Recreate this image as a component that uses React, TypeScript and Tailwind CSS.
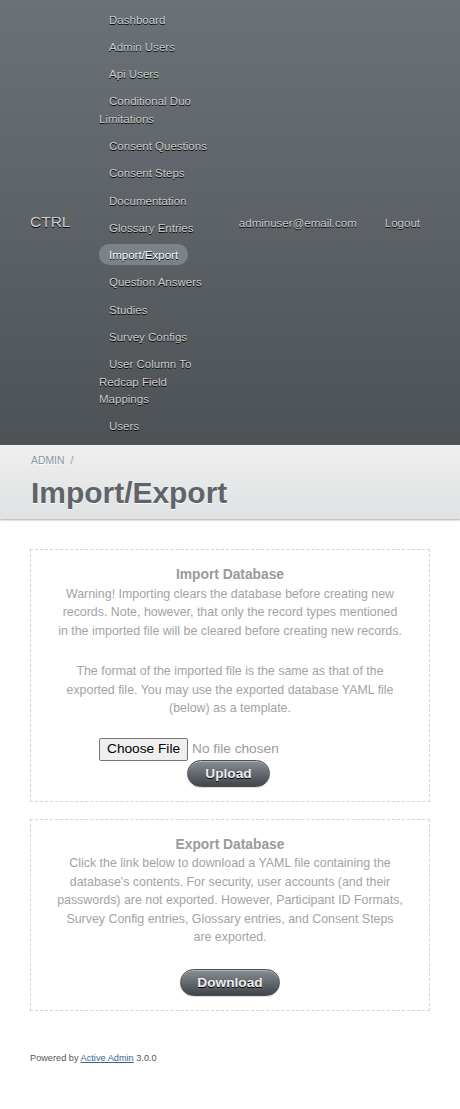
import React from "react";

const navItems = [
  "Dashboard",
  "Admin Users",
  "Api Users",
  "Conditional Duo Limitations",
  "Consent Questions",
  "Consent Steps",
  "Documentation",
  "Glossary Entries",
  "Import/Export",
  "Question Answers",
  "Studies",
  "Survey Configs",
  "User Column To Redcap Field Mappings",
  "Users",
];

function DarkButton({ label, px }: { label: string; px: string }) {
  return (
    <span
      className={`inline-block rounded-full border border-[#484e53] bg-[linear-gradient(180deg,#878e94,#40454a)] ${px} h-[27px] leading-[25px] text-[13.7px] font-bold text-[#efefef] [text-shadow:0_1px_0_#000] shadow-[inset_0_1px_0_rgba(255,255,255,0.35),0_1px_1px_rgba(0,0,0,0.15)]`}
    >
      {label}
    </span>
  );
}

export default function App() {
  return (
    <div className="min-h-[1109px] bg-white font-['Liberation_Sans',Arial,sans-serif] text-[11.52px] leading-[17.28px] text-[#323537]">
      {/* Header */}
      <div className="flex h-[445px] items-center border-b border-[#4e5258] bg-[linear-gradient(180deg,#6b7277,#4d5256)] px-[30px] [text-shadow:0_1px_0_#000]">
        <div className="w-[39px] text-[15.5px] font-normal leading-[22px] text-[#cdcdcd]">
          CTRL
        </div>
        <div className="ml-[30px] flex w-[111px] flex-col gap-[10px] pt-[3px]">
          {navItems.map((item) => (
            <div key={item} className="text-[#cdcdcd]">
              {item === "Import/Export" ? (
                <span className="rounded-[10px] bg-[#7b8288] px-[10px] pb-[4px] pt-[5px] text-white">
                  {item}
                </span>
              ) : (
                <span className="pl-[10px]">{item}</span>
              )}
            </div>
          ))}
        </div>
        <div className="mt-[3px] flex flex-1 justify-end gap-[8px] text-[#cdcdcd]">
          <span className="px-[10px]">adminuser@email.com</span>
          <span className="px-[10px]">Logout</span>
        </div>
      </div>

      {/* Title bar */}
      <div className="relative bg-[linear-gradient(180deg,#efefef,#dfe1e2)] px-[31px] pb-[8px] pt-[8px] shadow-[0_1px_2px_#aaa] [text-shadow:0_1px_0_#fff]">
        <div className="text-[10.4px] leading-[16px] text-[#8a949e]">
          ADMIN <span className="ml-[3px]">/</span>
        </div>
        <h2 className="mt-[6px] text-[29.95px] font-bold leading-[36px] text-[#5e6469]">
          Import/Export
        </h2>
      </div>

      {/* Content */}
      <div className="px-[30px] pt-[30px]">
        <div className="border border-dashed border-[#d4d4d4] px-[25.5px] pb-[14px] pt-[16px] text-center text-[12.4px] leading-[18.5px] text-[#a3a3a3]">
          <div className="text-[13.8px] font-bold text-[#9a9a9a]">Import Database</div>
          <p>
            Warning! Importing clears the database before creating new records. Note, however,
            that only the record types mentioned in the imported file will be cleared before
            creating new records.
          </p>
          <p className="mt-[22px]">
            The format of the imported file is the same as that of the exported file. You may use
            the exported database YAML file (below) as a template.
          </p>
          <div className="mx-auto mt-[20px] flex w-[262px] items-center text-[13.7px] leading-[16px]">
            <span className="flex h-[23px] items-center rounded-[2px] border border-[#767676] bg-[#efefef] px-[7px] text-black">
              Choose File
            </span>
            <span className="ml-[4px] text-[#9a9a9a]">No file chosen</span>
          </div>
          <div className="-mt-[1px] flex justify-center pr-[3px]">
            <DarkButton label="Upload" px="px-[17px]" />
          </div>
        </div>

        <div className="mt-[17px] border border-dashed border-[#d4d4d4] px-[25.5px] pb-[14px] pt-[16px] text-center text-[12.4px] leading-[18.5px] text-[#a3a3a3]">
          <div className="text-[13.8px] font-bold text-[#9a9a9a]">Export Database</div>
          <p>
            Click the link below to download a YAML file containing the database's contents. For
            security, user accounts (and their passwords) are not exported. However, Participant
            ID Formats, Survey Config entries, Glossary entries, and Consent Steps are exported.
          </p>
          <div className="mt-[22px] flex justify-center">
            <DarkButton label="Download" px="px-[16px]" />
          </div>
        </div>
      </div>

      {/* Footer */}
      <div className="px-[30px] pt-[40px] text-[9.2px] leading-[14px] text-[#555]">
        Powered by{" "}
        <a className="text-[#38678b] underline" href="#">
          Active Admin
        </a>{" "}
        3.0.0
      </div>
    </div>
  );
}
